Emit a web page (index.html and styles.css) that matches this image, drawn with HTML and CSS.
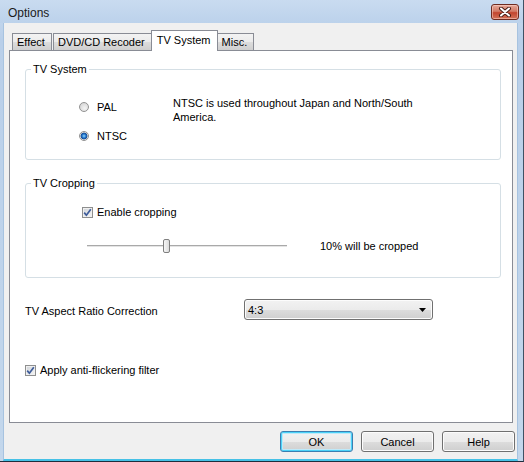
FILE: index.html
```html
<!DOCTYPE html>
<html lang="en">

<head>
 <meta charset="UTF-8">
 <meta name="viewport" content="width=device-width">
 <title>Options</title>
 <link rel="stylesheet" href="styles.css">
</head>

<body>

 <div class="window">

  <div class="titlebar">
   <span class="title">Options</span>
   <span class="close">
    <svg width="14" height="10" viewBox="0 0 14 10">
     <path d="M3 1.5 L11 8.5 M11 1.5 L3 8.5" stroke="#4a1f18" stroke-width="4" stroke-linecap="round"/>
     <path d="M3 1.5 L11 8.5 M11 1.5 L3 8.5" stroke="#fff" stroke-width="2" stroke-linecap="round"/>
    </svg>
   </span>
  </div>

  <div class="client">

   <div class="tabs">
    <span class="tab">Effect</span>
    <span class="tab">DVD/CD Recoder</span>
    <span class="tab active">TV System</span>
    <span class="tab">Misc.</span>
   </div>

   <div class="panel">

    <div class="group system">
     <span class="group-title">TV System</span>
     <div class="radios">
      <label class="radio"><span class="dot"></span>PAL</label>
      <label class="radio"><span class="dot on"></span>NTSC</label>
     </div>
     <p class="desc">NTSC is used throughout Japan and North/South America.</p>
    </div>

    <div class="group cropping">
     <span class="group-title">TV Cropping</span>
     <label class="check">
      <span class="box"><svg width="9" height="9" viewBox="0 0 9 9"><path d="M1.2 4.6 L3.4 7.2 L7.8 1.2" fill="none" stroke="#3e5c9a" stroke-width="1.7"/></svg></span>
      Enable cropping
     </label>
     <div class="slider-row">
      <div class="slider"><span class="thumb" style="left: 38%"></span></div>
      <span class="slider-text">10% will be cropped</span>
     </div>
    </div>

    <div class="aspect">
     <span class="aspect-label">TV Aspect Ratio Correction</span>
     <div class="combo">
      <span>4:3</span>
      <svg width="7" height="4" viewBox="0 0 7 4"><path d="M0 0 H7 L3.5 4 Z" fill="#000"/></svg>
     </div>
    </div>

    <label class="check flicker">
     <span class="box"><svg width="9" height="9" viewBox="0 0 9 9"><path d="M1.2 4.6 L3.4 7.2 L7.8 1.2" fill="none" stroke="#3e5c9a" stroke-width="1.7"/></svg></span>
     Apply anti-flickering filter
    </label>

   </div>

   <div class="buttons">
    <button type="button" class="default">OK</button>
    <button type="button">Cancel</button>
    <button type="button">Help</button>
   </div>

  </div>

 </div>

</body>
</html>
```

FILE: styles.css
```css
body {
  margin: 0;
  font-family: 'Liberation Sans', Arial, sans-serif;
  font-size: 11px;
  color: #000;
}
.window {
  width: 524px;
  height: 462px;
  box-sizing: border-box;
  display: flex;
  flex-direction: column;
  background: linear-gradient(#cadcf0, #b9cfe9 40px, #c3d7ec);
  border-right: 1px solid #3f5164;
  border-bottom: 1px solid #1f2d3d;
  overflow: hidden;
}
.titlebar {
  height: 23px;
  flex: none;
  display: flex;
  align-items: flex-start;
  justify-content: space-between;
  padding-left: 8px;
  background: linear-gradient(#c9dbf0, #bcd2eb);
}
.title {
  margin-top: 6px;
  font-size: 12px;
  line-height: 14px;
  color: #1a1a1a;
}
.close {
  margin: 4px 4px 0 0;
  width: 28px;
  height: 16px;
  box-sizing: border-box;
  display: flex;
  align-items: center;
  justify-content: center;
  border: 1px solid #6e2b20;
  border-radius: 3px;
  background: linear-gradient(#e6a898, #d27a66 45%, #c2452f 55%, #d3735a);
  box-shadow: inset 0 0 0 1px rgba(255, 220, 210, 0.5);
}
.client {
  flex: 1;
  margin: 0 5px 0 3px;
  background-color: #f0f0f0;
  border-left: 1px solid #a7c3e0;
  border-right: 1px solid #a7c3e0;
  border-bottom: 2px solid #46c1e6;
}
.tabs {
  display: flex;
  align-items: flex-end;
  height: 20px;
  margin: 7px 0 0 5px;
  padding-left: 3px;
}
.tab {
  height: 17px;
  box-sizing: border-box;
  line-height: 16px;
  padding: 0 6px 0 4px;
  margin-right: 1px;
  border: 1px solid #898c95;
  border-bottom: none;
  background: linear-gradient(#f3f3f3, #ebebeb 50%, #dddddd 50%, #cfcfcf);
}
.tab.active {
  position: relative;
  z-index: 1;
  height: 21px;
  line-height: 19px;
  margin: 0 -1px -1px -2px;
  padding: 0 6px 0 5px;
  background: #fff;
}
.panel {
  height: 373px;
  box-sizing: border-box;
  margin: 0 4px 0 5px;
  border: 1px solid #898c95;
  background-color: #fff;
  overflow: hidden;
}
.group {
  position: relative;
  box-sizing: border-box;
  width: 476px;
  margin-left: 15px;
  border: 1px solid #d5dfe5;
  border-radius: 3px;
}
.group-title {
  position: absolute;
  top: -8px;
  left: 5px;
  padding: 0 2px;
  line-height: 14px;
  background-color: #fff;
}
.system {
  display: flex;
  align-items: flex-start;
  height: 91px;
  margin-top: 18px;
  padding: 26px 0 0 53px;
}
.radios {
  width: 94px;
  margin-top: 4px;
  display: flex;
  flex-direction: column;
  gap: 15px;
}
.radio {
  display: flex;
  align-items: center;
  gap: 8px;
  line-height: 14px;
}
.dot {
  width: 10px;
  height: 10px;
  box-sizing: border-box;
  border: 1px solid #929292;
  border-radius: 50%;
  background: radial-gradient(circle at 60% 65%, #f4f4f4, #cdcdcd);
}
.dot.on {
  background: radial-gradient(circle, #8fd8ff 0, #1f70c8 2px, #17488c 3.2px, #e8e8e8 3.7px, #d0d0d0);
}
.desc {
  width: 250px;
  margin: 0;
  line-height: 14px;
}
.cropping {
  height: 95px;
  margin-top: 23px;
  padding: 21px 0 0 56px;
}
.check {
  display: flex;
  align-items: center;
  gap: 4px;
  line-height: 14px;
}
.box {
  width: 11px;
  height: 11px;
  box-sizing: border-box;
  display: flex;
  align-items: center;
  justify-content: center;
  border: 1px solid #8e8f8f;
  background: linear-gradient(135deg, #cfd3d8, #f6f6f6);
  box-shadow: inset 0 0 0 1px #f0f0f0;
}
.slider-row {
  display: flex;
  align-items: center;
  height: 14px;
  margin: 20px 0 0 5px;
}
.slider {
  position: relative;
  width: 200px;
  height: 14px;
}
.slider::before {
  content: "";
  position: absolute;
  left: 0;
  right: 0;
  top: 6px;
  height: 1px;
  background-color: #a9a9a9;
  border-bottom: 1px solid #e4e4e4;
}
.thumb {
  position: absolute;
  top: 0;
  width: 7px;
  height: 14px;
  box-sizing: border-box;
  border: 1px solid #7f7f7f;
  border-radius: 2px;
  background: linear-gradient(90deg, #f6f6f6, #dcdcdc);
}
.slider-text {
  margin-left: 33px;
}
.aspect {
  display: flex;
  align-items: center;
  margin: 21px 0 0 15px;
}
.aspect-label {
  width: 219px;
  padding-top: 2px;
}
.combo {
  width: 189px;
  height: 21px;
  box-sizing: border-box;
  display: flex;
  align-items: center;
  justify-content: space-between;
  padding: 0 6px 0 3px;
  border: 1px solid #707070;
  border-radius: 3px;
  background: linear-gradient(#f2f2f2, #ebebeb 50%, #dddddd 50%, #cfcfcf);
  box-shadow: inset 0 0 0 1px #fcfcfc;
}
.flicker {
  margin: 43px 0 0 15px;
}
.buttons {
  display: flex;
  justify-content: flex-end;
  gap: 8px;
  margin-top: 8px;
  padding-right: 2px;
}
button {
  width: 73px;
  height: 21px;
  padding: 0;
  font-family: inherit;
  font-size: 11px;
  color: #000;
  border: 1px solid #707070;
  border-radius: 3px;
  background: linear-gradient(#f2f2f2, #ebebeb 50%, #dddddd 50%, #cfcfcf);
  box-shadow: inset 0 0 0 1px #fcfcfc;
}
button.default {
  border-color: #3c7fb1;
  box-shadow: inset 0 0 0 1px #4bd2f8, inset 0 0 0 2px #bfe9f9;
}
```
